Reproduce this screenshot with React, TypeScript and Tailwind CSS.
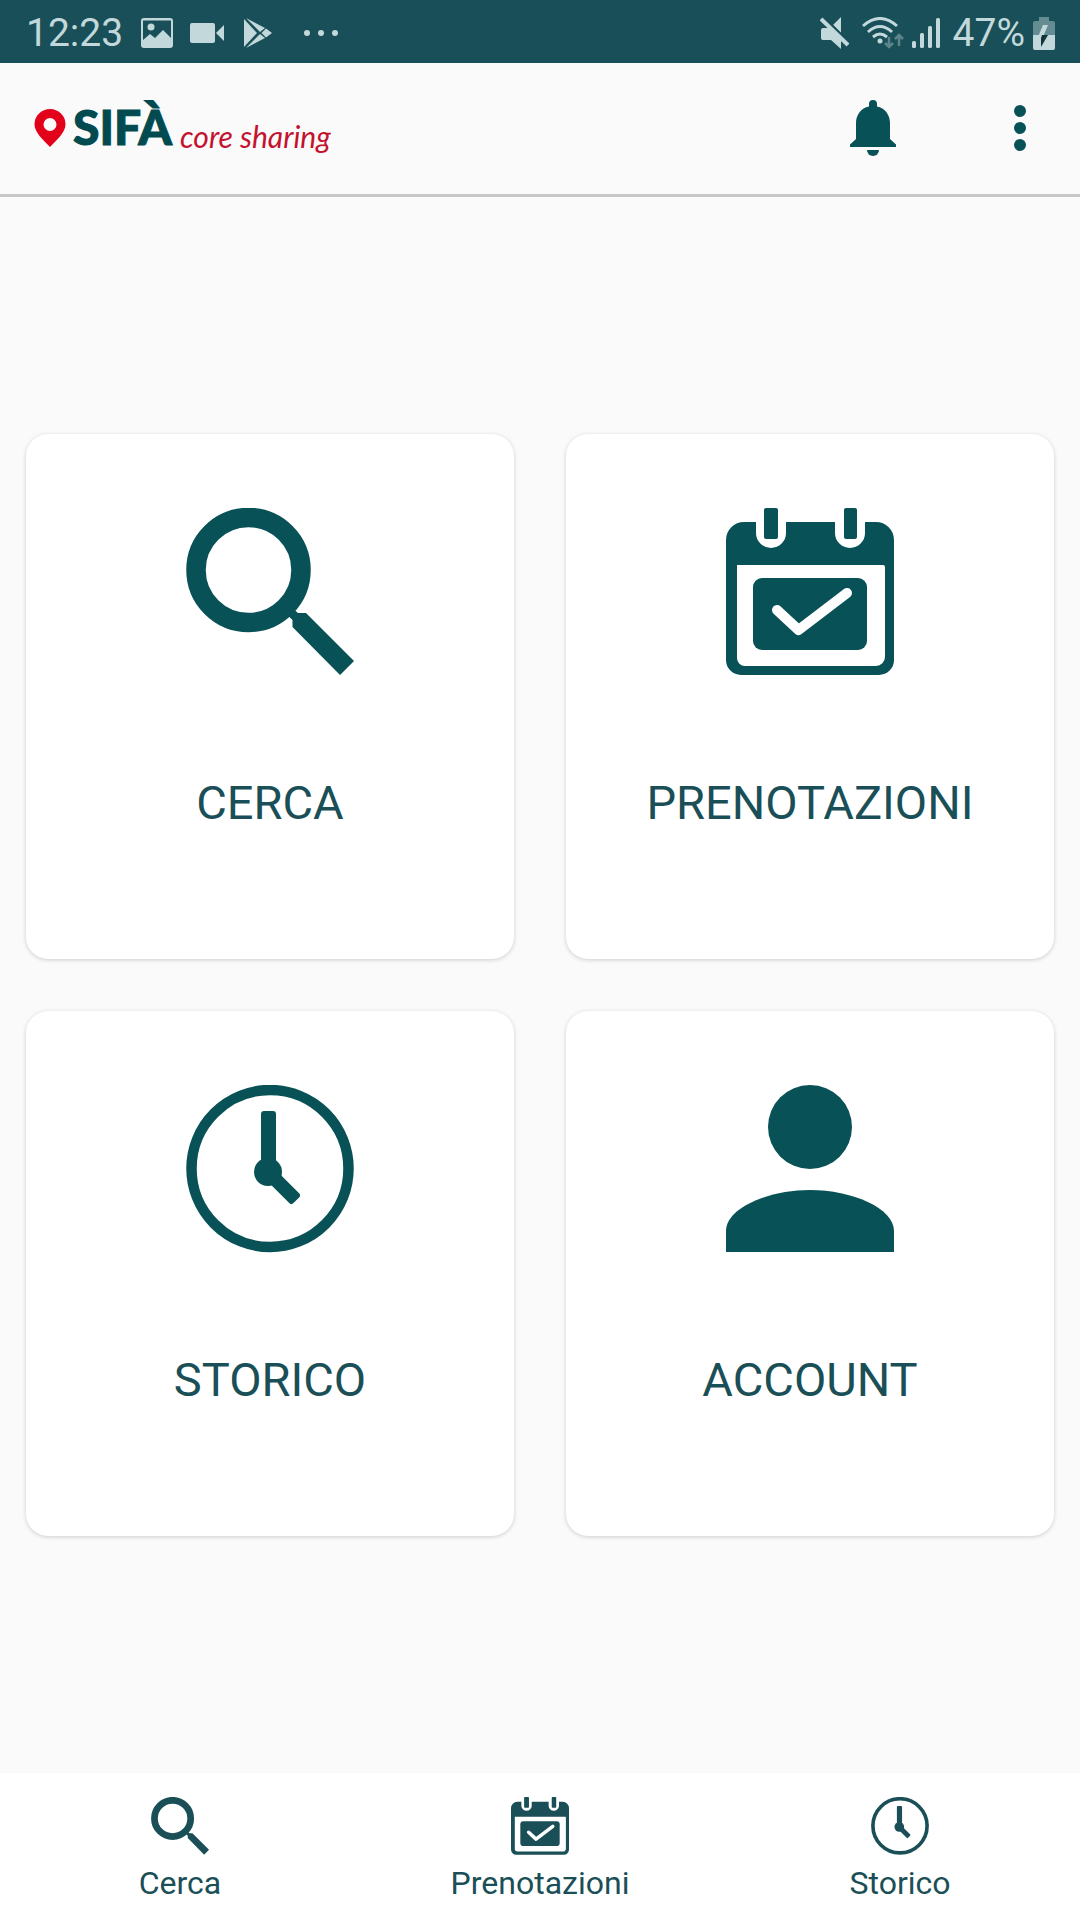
import type { ReactNode } from "react";

type IconProps = { className?: string };

function SearchIcon({ className }: IconProps) {
  return (
    <svg viewBox="0 0 168 168" className={className} fill="currentColor" aria-hidden="true">
      <circle cx="62.5" cy="62" r="52.5" fill="none" stroke="currentColor" strokeWidth="19.5" />
      <path d="M104 98L112 105H120L168 153L154 167L106.500 119V112L98 104Z" />
    </svg>
  );
}

function CalendarIcon({ className }: IconProps) {
  return (
    <svg viewBox="0 0 168 168" className={className} fill="currentColor" aria-hidden="true">
      <path
        fillRule="evenodd"
        d="M18 14H30V25A15 15 0 0 0 60 25V14H109V25A15 15 0 0 0 139 25V14H150A18 18 0 0 1 168 32V152A15 15 0 0 1 153 167H15A15 15 0 0 1 0 152V32A18 18 0 0 1 18 14ZM11 57V150A8 8 0 0 0 19 158H150A9 9 0 0 0 159 149V59A2 2 0 0 0 157 57Z"
      />
      <rect x="38" y="0" width="14" height="31" rx="2" />
      <rect x="118" y="0" width="13" height="31" rx="2" />
      <rect x="27" y="70" width="114" height="72" rx="9" />
      <path
        d="M51 102L72.500 122L121 85"
        fill="none"
        stroke="white"
        strokeWidth="10"
        strokeLinecap="round"
        strokeLinejoin="round"
      />
    </svg>
  );
}

function ClockIcon({ className }: IconProps) {
  return (
    <svg viewBox="0 0 168 168" className={className} fill="currentColor" aria-hidden="true">
      <circle cx="84" cy="83.5" r="78.5" fill="none" stroke="currentColor" strokeWidth="10.5" />
      <rect x="75" y="26" width="15" height="60" rx="3" />
      <circle cx="82" cy="87" r="14" />
      <rect x="82" y="80" width="40" height="14" rx="3" transform="rotate(45 82 87)" />
    </svg>
  );
}

function AccountIcon({ className }: IconProps) {
  return (
    <svg viewBox="0 0 168 168" className={className} fill="currentColor" aria-hidden="true">
      <circle cx="84" cy="42" r="42" />
      <path d="M0 167V146C0 123 42 105 84 105S168 123 168 146V167Z" />
    </svg>
  );
}

function BellIcon({ className }: IconProps) {
  return (
    <svg viewBox="0 0 46 56" className={className} fill="currentColor" aria-hidden="true">
      <path d="M19 6.500V4Q19 0 23 0T27 4V6.500C35 8 40 15 40 23V39L46 44.500V47H0V44.500L6 39V23C6 15 11 8 19 6.500Z" />
      <path d="M17 50H29A6 6 0 0 1 17 50Z" />
    </svg>
  );
}

function MoreIcon({ className }: IconProps) {
  return (
    <svg viewBox="0 0 12 46" className={className} fill="currentColor" aria-hidden="true">
      <circle cx="6" cy="6" r="6" />
      <circle cx="6" cy="23" r="6" />
      <circle cx="6" cy="40" r="6" />
    </svg>
  );
}

function PinIcon({ className }: IconProps) {
  return (
    <svg viewBox="0 0 32 38" className={className} fill="currentColor" aria-hidden="true">
      <path
        fillRule="evenodd"
        d="M16 0A15.500 15.500 0 0 1 31.500 15.500C31.500 23 23 31 16 38C9 31 .5 23 .5 15.500A15.500 15.500 0 0 1 16 0ZM16 9A6.500 6.500 0 1 0 16 22A6.500 6.500 0 1 0 16 9Z"
      />
    </svg>
  );
}

function StatusBar() {
  return (
    <div className="flex h-[63px] items-center justify-between bg-[#184f58] pt-[3px] pr-[25px] pl-[26px] text-[39px] leading-[48px] text-[#c3d8da]">
      <div className="flex items-center">
        <span>12:23</span>
        <svg viewBox="0 0 32 30" className="ml-[18px] h-[30px] w-8" fill="currentColor" aria-hidden="true">
          <path
            fillRule="evenodd"
            d="M3 0H29A3 3 0 0 1 32 3V27A3 3 0 0 1 29 30H3A3 3 0 0 1 0 27V3A3 3 0 0 1 3 0ZM2 2.500V22L9 16L14 20L22 12L30 20V2.500Z"
          />
          <circle cx="10" cy="9" r="3.500" />
        </svg>
        <svg viewBox="0 0 34 20" className="ml-[17px] h-5 w-[34px]" fill="currentColor" aria-hidden="true">
          <rect width="25" height="20" rx="2" />
          <path d="M26 10L34 2V18Z" />
        </svg>
        <svg viewBox="0 0 28 30" className="ml-5 h-[30px] w-7" fill="currentColor" aria-hidden="true">
          <path d="M0 1L13 15L0 29Z" />
          <path d="M2 0L21 10L16 14Z" />
          <path d="M2 30L21 20L16 16Z" />
          <path d="M22 10.500L28 15L22 19.500L17.500 15Z" />
        </svg>
        <svg viewBox="0 0 34 6" className="ml-8 h-[6px] w-[34px]" fill="currentColor" aria-hidden="true">
          <circle cx="3" cy="3" r="3" />
          <circle cx="17" cy="3" r="3" />
          <circle cx="31" cy="3" r="3" />
        </svg>
      </div>
      <div className="flex items-center">
        <svg viewBox="0 0 30 32" className="h-8 w-[30px]" fill="currentColor" aria-hidden="true">
          <path d="M21 0V16L13 8Z" />
          <path d="M2 1L29 28" stroke="#184f58" strokeWidth="6" />
          <path d="M1 2L28 28" stroke="currentColor" strokeWidth="4" />
          <path d="M1 13Q1 11 3 11H10L21 22V32L11 23H3Q1 23 1 21Z" />
        </svg>
        <svg viewBox="0 0 42 32" className="ml-3 h-8 w-[42px]" fill="none" stroke="currentColor" strokeWidth="3" aria-hidden="true">
          <path d="M1 9Q18 -6 35 9M6 15Q18 4 30 15M11 20Q18 14 25 20" />
          <circle cx="18" cy="24" r="2.500" fill="currentColor" stroke="none" />
          <g opacity=".4" strokeWidth="2.500">
            <path d="M27 20V30M23 26L27 30L31 26" />
            <path d="M37 29V18M33 22L37 18L41 22" />
          </g>
        </svg>
        <svg viewBox="0 0 28 30" className="ml-2 h-[30px] w-7" fill="currentColor" aria-hidden="true">
          <rect x="0" y="23" width="4" height="7" rx="1.500" />
          <rect x="8" y="15" width="4" height="15" rx="1.500" />
          <rect x="16" y="8" width="4" height="22" rx="1.500" />
          <rect x="24" y="0" width="4" height="30" rx="1.500" />
        </svg>
        <span className="ml-[13px]">47%</span>
        <svg viewBox="0 0 22 33" className="ml-2 h-[33px] w-[22px]" fill="currentColor" aria-hidden="true">
          <path opacity=".45" d="M6 0H16V4H20Q22 4 22 6V19H0V6Q0 4 2 4H6Z" />
          <path d="M0 18H22V31Q22 33 20 33H2Q0 33 0 31Z" />
          <path d="M10 8L5 20H10L15 8Z" />
          <path d="M9 18H15L8 30V21Z" fill="#12343a" />
        </svg>
      </div>
    </div>
  );
}

function Header() {
  return (
    <header className="flex h-[134px] items-center justify-between border-b-3 border-[#c6c6c6] pr-[54px] pb-[2px] pl-[34px]">
      <a href="#" className="flex items-center" aria-label="SIFÀ core sharing">
        <PinIcon className="h-[38px] w-8 text-[#e2001a]" />
        <span className="mb-[2px] ml-[7px] font-[Lato] text-[48px] leading-[56px] font-black text-[#004a50] [-webkit-text-stroke:1px_#004a50]">
          SIFÀ
        </span>
        <span className="mt-4 ml-2 font-[Lato] text-[30px] leading-8 text-[#c4122f] italic">core sharing</span>
      </a>
      <div className="flex items-center gap-[118px]">
        <button type="button" aria-label="Notifiche">
          <BellIcon className="h-14 w-[46px]" />
        </button>
        <button type="button" aria-label="Altre opzioni">
          <MoreIcon className="h-[46px] w-3" />
        </button>
      </div>
    </header>
  );
}

function Card({ label, children }: { label: string; children: ReactNode }) {
  return (
    <button
      type="button"
      className="flex flex-col items-center gap-[99px] rounded-[22px] bg-white pt-[74px] pb-32 shadow-[0_1px_4px_rgba(0,0,0,0.18)]"
    >
      {children}
      <span className="text-[47px] leading-[56px] text-[#1a4f57]">{label}</span>
    </button>
  );
}

function NavItem({ label, children }: { label: string; children: ReactNode }) {
  return (
    <a href="#" className="flex flex-1 flex-col items-center gap-2 pt-6 pb-[17px] text-[#1a4f57]">
      {children}
      <span className="text-[32px] leading-10">{label}</span>
    </a>
  );
}

export default function App() {
  return (
    <div className="flex min-h-screen flex-col bg-[#fafafa] font-[Roboto,sans-serif] text-[#085156]">
      <StatusBar />
      <Header />
      <main className="grid flex-1 grid-cols-2 content-center gap-[52px] px-[26px]">
        <Card label="CERCA">
          <SearchIcon className="size-[168px]" />
        </Card>
        <Card label="PRENOTAZIONI">
          <CalendarIcon className="size-[168px]" />
        </Card>
        <Card label="STORICO">
          <ClockIcon className="size-[168px]" />
        </Card>
        <Card label="ACCOUNT">
          <AccountIcon className="size-[168px]" />
        </Card>
      </main>
      <nav className="flex bg-white">
        <NavItem label="Cerca">
          <SearchIcon className="size-[58px]" />
        </NavItem>
        <NavItem label="Prenotazioni">
          <CalendarIcon className="size-[58px]" />
        </NavItem>
        <NavItem label="Storico">
          <ClockIcon className="size-[58px]" />
        </NavItem>
      </nav>
    </div>
  );
}
